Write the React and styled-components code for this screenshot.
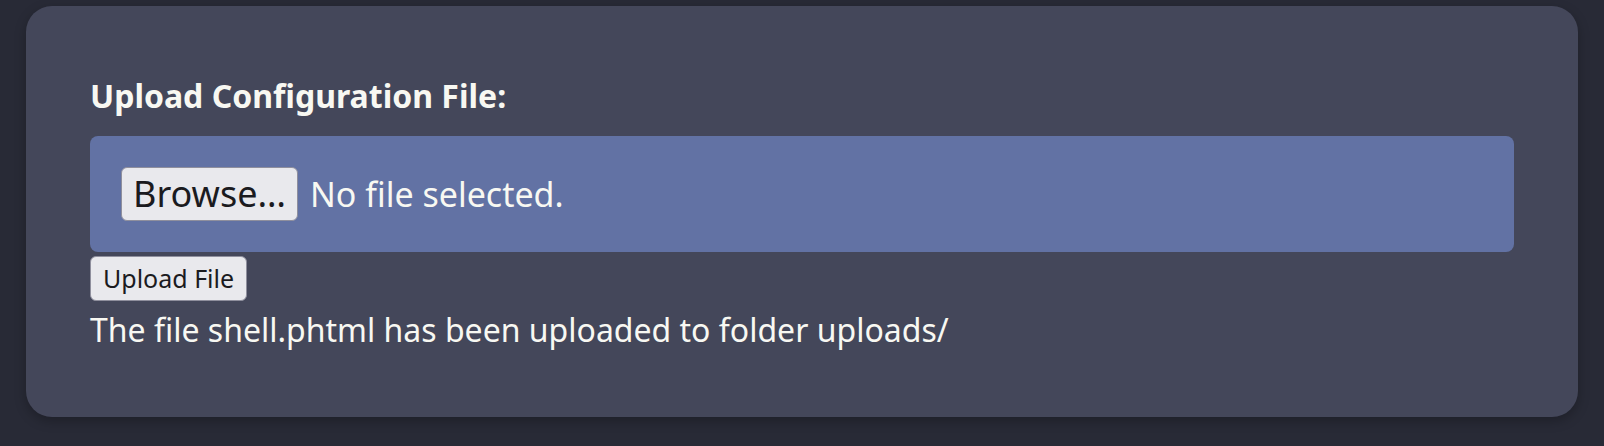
import React from "react";
import styled, { createGlobalStyle } from "styled-components";

const GlobalStyle = createGlobalStyle`
  html, body {
    margin: 0;
    padding: 0;
    background: #282a36;
  }
  body {
    font-family: "Noto Sans", "Open Sans", sans-serif;
    color: #f8f8f2;
  }
`;

const Page = styled.div`
  padding: 6px 26px 29px 26px;
`;

const Card = styled.div`
  background: #44475a;
  border-radius: 26px;
  padding: 68px 64px 65px 64px;
  box-shadow: 0 4px 12px rgba(0, 0, 0, 0.25);
`;

const Label = styled.label`
  display: block;
  font-size: 32px;
  line-height: 44px;
  font-weight: 700;
  margin-bottom: 18px;
`;

const DropZone = styled.div`
  background: #6272a4;
  border-radius: 8px;
  height: 116px;
  padding: 0 31px;
  display: flex;
  align-items: center;
  gap: 12px;
  box-sizing: border-box;
`;

const NativeButton = styled.button`
  font-family: "Noto Sans", sans-serif;
  font-size: ${(p) => p.$size}px;
  height: ${(p) => p.$height}px;
  padding: 0 ${(p) => p.$pad}px;
  background: #e9e9ed;
  color: #1b1b1f;
  border: 1px solid #8f8f9d;
  border-radius: 6px;
  line-height: 1;
  cursor: pointer;
`;

const NoFile = styled.span`
  font-size: 34px;
  color: #f8f8f2;
`;

const UploadRow = styled.div`
  margin-top: 4px;
  margin-bottom: 7px;
`;

const Message = styled.p`
  margin: 0;
  font-size: 32px;
  line-height: 44px;
`;

const App = () => {
  return (
    <>
      <GlobalStyle />
      <Page>
        <Card>
          <Label>Upload Configuration File:</Label>
          <DropZone>
            <NativeButton $size={36} $height={54} $pad={11}>
              Browse…
            </NativeButton>
            <NoFile>No file selected.</NoFile>
          </DropZone>
          <UploadRow>
            <NativeButton $size={25} $height={45} $pad={12}>
              Upload File
            </NativeButton>
          </UploadRow>
          <Message>The file shell.phtml has been uploaded to folder uploads/</Message>
        </Card>
      </Page>
    </>
  );
};

export default App;
